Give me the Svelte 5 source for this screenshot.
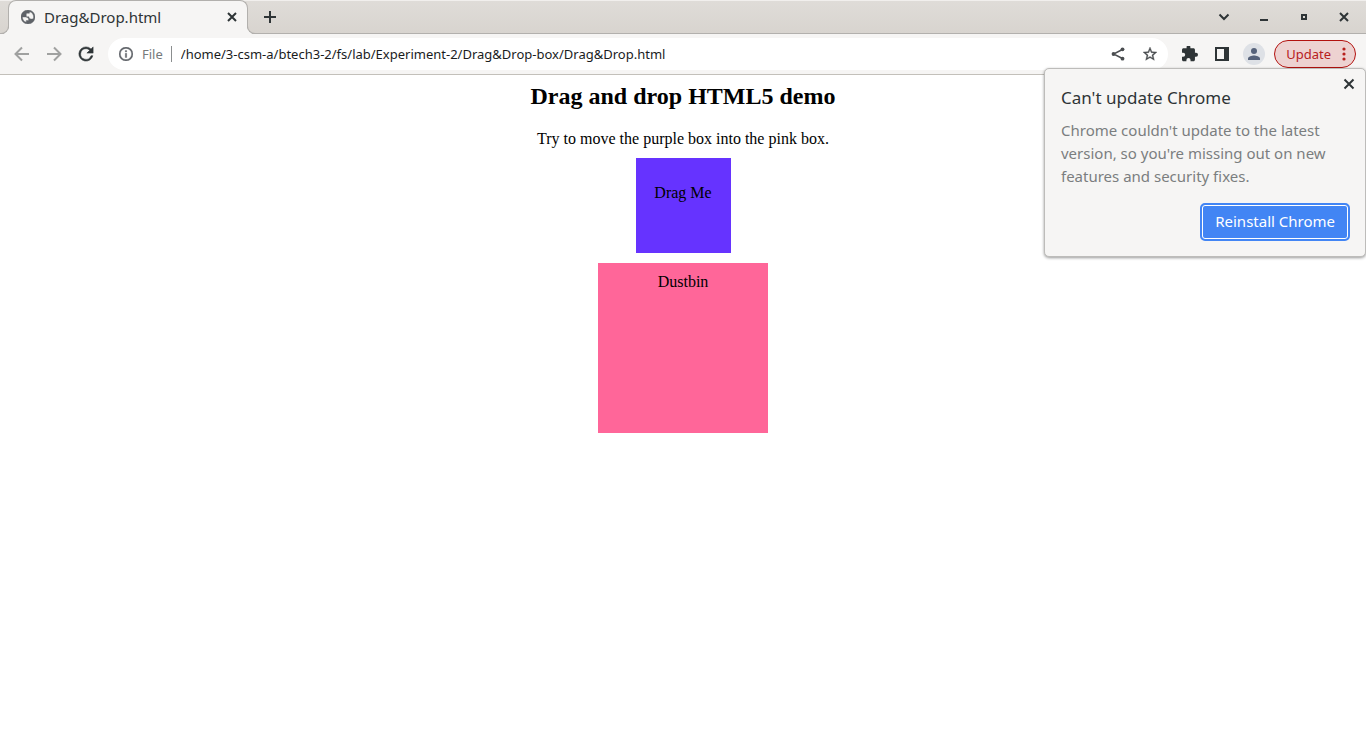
<script>
  const path = '/home/3-csm-a/btech3-2/fs/lab/Experiment-2/Drag&Drop-box/Drag&Drop.html';
  let address = $state(path);
  let popupOpen = $state(true);
  let dropped = $state(false);
</script>

<svelte:head><title>Drag&amp;Drop.html</title></svelte:head>

<div class="browser">
  <header class="strip">
    <div class="tab">
      <svg class="favicon" viewBox="2 2 20 20" width="14" height="14" aria-hidden="true"><path d="M12 2C6.48 2 2 6.48 2 12s4.48 10 10 10 10-4.48 10-10S17.52 2 12 2zM4 12h4.4c3.4.02 4.9 1.73 4.5 5.1H9.500v2.500C6.100 18.500 4 15.500 4 12zm16 0c0 .6-.1 1.200-.2 1.800-.7.800-1.700 1.200-3.200 1.200-2.100 0-3.200-1.100-3.200-3.200h-3.900V8.200c0-1 .5-1.600 1.500-1.600H14c0-1.100.2-1.800.7-2.100C17.900 5.600 20 8.600 20 12z"/></svg>
      <span class="tab-title">Drag&amp;Drop.html</span>
      <button class="icon close" aria-label="Close tab"><svg viewBox="0 0 10 10" width="10" height="10"><path d="M1 1l8 8M9 1L1 9"/></svg></button>
    </div>
    <button class="icon new-tab" aria-label="New tab"><svg viewBox="0 0 12 12" width="12" height="12"><path d="M6 0v12M0 6h12"/></svg></button>
    <div class="window-controls">
      <button class="icon" aria-label="Search tabs"><svg viewBox="0 0 12 12" width="12" height="12"><path class="thin" d="M1.500 3.500L6 8l4.500-4.500"/></svg></button>
      <button class="icon" aria-label="Minimize"><svg viewBox="0 0 12 12" width="12" height="12"><path d="M2 9h8"/></svg></button>
      <button class="icon" aria-label="Maximize"><svg viewBox="0 0 12 12" width="12" height="12"><path d="M4 4h4v4H4z"/></svg></button>
      <button class="icon" aria-label="Close window"><svg viewBox="0 0 12 12" width="12" height="12"><path d="M2 2l8 8M10 2l-8 8"/></svg></button>
    </div>
  </header>

  <nav class="toolbar" aria-label="Browser toolbar">
    <div class="history">
      <button class="icon" aria-label="Back" disabled><svg viewBox="0 0 16 16" width="16" height="16"><path d="M15 8H2M8 1.500L1.500 8 8 14.500"/></svg></button>
      <button class="icon" aria-label="Forward" disabled><svg viewBox="0 0 16 16" width="16" height="16"><path d="M1 8h13M8 1.500L14.500 8 8 14.500"/></svg></button>
      <button class="icon fill" aria-label="Reload"><svg class="reload" viewBox="3 3 18 18" width="16" height="16"><path d="M17.650 6.350A7.960 7.960 0 0 0 12 4a8 8 0 1 0 7.730 10h-2.080A6 6 0 1 1 12 6c1.660 0 3.140.690 4.220 1.780L13 11h7V4z"/></svg></button>
    </div>
    <div class="omnibox">
      <svg class="info" viewBox="2 2 20 20" width="14" height="14" aria-hidden="true"><path d="M11 7h2v2h-2zm0 4h2v6h-2zm1-9a10 10 0 1 0 0 20 10 10 0 0 0 0-20zm0 18a8 8 0 1 1 0-16 8 8 0 0 1 0 16z"/></svg>
      <span class="scheme">File</span>
      <input aria-label="Address" bind:value={address} spellcheck="false" />
      <button class="icon small" aria-label="Share"><svg viewBox="0 0 14 14" width="14" height="14"><path class="line" d="M11.500 2.500L2.500 7l9 4.500"/><circle cx="11.500" cy="2.300" r="1.900"/><circle cx="2.500" cy="7" r="1.900"/><circle cx="11.500" cy="11.700" r="1.900"/></svg></button>
      <button class="icon small" aria-label="Bookmark"><svg class="star" viewBox="2 2 20 20" width="14" height="14"><path d="M22 9.240l-7.190-.620L12 2 9.190 8.630 2 9.240l5.460 4.730L5.820 21 12 17.270 18.180 21l-1.630-7.030L22 9.240zM12 15.400l-3.760 2.270 1-4.280-3.320-2.880 4.380-.380L12 6.100l1.710 4.040 4.380.380-3.320 2.880 1 4.280z"/></svg></button>
    </div>
    <div class="actions">
      <button class="icon fill" aria-label="Extensions"><svg viewBox="2 2 21 21" width="16" height="16"><path d="M20.500 11H19V7c0-1.100-.9-2-2-2h-4V3.500a2.500 2.500 0 0 0-5 0V5H4c-1.100 0-1.990.9-1.990 2v3.800H3.500a2.700 2.700 0 0 1 0 5.400H2V20c0 1.100.9 2 2 2h3.800v-1.500a2.700 2.700 0 0 1 5.400 0V22H17c1.100 0 2-.9 2-2v-4h1.500a2.500 2.500 0 0 0 0-5z"/></svg></button>
      <button class="icon fill" aria-label="Side panel"><svg viewBox="0 0 14 14" width="14" height="14"><path fill-rule="evenodd" d="M0 0h14v14H0zM2 2v10h7V2z"/></svg></button>
      <button class="avatar" aria-label="Profile"><svg viewBox="0 0 12 12" width="12" height="12"><circle cx="6" cy="3" r="3"/><path d="M0 12v-1.500C0 8.500 4 7.500 6 7.500s6 1 6 3V12z"/></svg></button>
      <button class="update">Update<svg viewBox="0 0 4 14" width="4" height="14" aria-hidden="true"><circle cx="2" cy="2" r="1.600"/><circle cx="2" cy="7" r="1.600"/><circle cx="2" cy="12" r="1.600"/></svg></button>
    </div>
  </nav>

  {#if popupOpen}
    <section class="popup" role="dialog" aria-labelledby="popup-title">
      <button class="icon dismiss" aria-label="Close" onclick={() => (popupOpen = false)}><svg viewBox="0 0 12 12" width="12" height="12"><path d="M1.500 1.500l9 9M10.500 1.500l-9 9"/></svg></button>
      <h1 id="popup-title">Can't update Chrome</h1>
      <p>Chrome couldn't update to the latest version, so you're missing out on new features and security fixes.</p>
      <button class="reinstall">Reinstall Chrome</button>
    </section>
  {/if}
</div>

<main>
  <h2>Drag and drop HTML5 demo</h2>
  <p>Try to move the purple box into the pink box.</p>
  {#if !dropped}
    <div class="drag" role="group" draggable="true">Drag Me</div>
  {/if}
  <div class="bin" role="group" ondragover={(e) => e.preventDefault()} ondrop={() => (dropped = true)}>
    Dustbin
    {#if dropped}<div class="drag">Drag Me</div>{/if}
  </div>
</main>

<style>
  :global(body) { background: #fff; }
  .browser { position: relative; font-family: "Noto Sans", "Open Sans", sans-serif; color: #2e3436; }
  button { font: inherit; border: 0; padding: 0; background: none; }
  svg { display: block; flex: none; }
  .icon { display: grid; place-items: center; width: 16px; height: 16px; flex: none; }
  .icon path { fill: none; stroke: #2e3436; stroke-width: 2; }
  .icon:disabled path { stroke: #a0a1a0; }
  .fill path { fill: #2e3436; stroke-width: 0; }
  .fill .reload path { stroke-width: 0.6; }
  .small path { fill: #4a4d50; stroke: none; }
  .small .star path { stroke: #4a4d50; stroke-width: 0.5; }
  .small circle { fill: #4a4d50; }
  .small .line { fill: none; stroke: #4a4d50; stroke-width: 1.4; }

  .strip {
    display: flex; align-items: center; height: 34px; box-sizing: border-box;
    padding: 0 14px 0 8px; border-bottom: 1px solid #b2b0ad;
    background: linear-gradient(#f1efed 1px, #dfdcd8 1px, #d8d4cf);
  }
  .tab {
    position: relative; display: flex; align-items: center; box-sizing: border-box;
    width: 240px; height: 34px; margin-bottom: -1px; padding: 0 7px 2px 12px;
    background: #f6f5f4; border: 1px solid #b2b0ad; border-bottom: 0; border-radius: 8px 8px 0 0;
  }
  .tab::before, .tab::after {
    content: ""; position: absolute; bottom: 0; width: 8px; height: 8px; box-sizing: border-box;
    border-bottom: 1px solid #b2b0ad;
  }
  .tab::before { left: -8px; border-right: 1px solid #b2b0ad; border-bottom-right-radius: 8px; box-shadow: 3px 2px 0 #f6f5f4; clip-path: inset(0 -1px 0 0); }
  .tab::after { right: -8px; border-left: 1px solid #b2b0ad; border-bottom-left-radius: 8px; box-shadow: -3px 2px 0 #f6f5f4; clip-path: inset(0 0 0 -1px); }
  .favicon { fill: #5f6368; stroke: #5f6368; stroke-width: 0.6; }
  .tab-title { flex: 1; margin-left: 9px; font-size: 15px; line-height: 20px; }
  .new-tab { margin-left: 14px; }
  .window-controls { display: flex; gap: 24px; margin-left: auto; }

  .toolbar {
    display: flex; align-items: center; height: 41px; box-sizing: border-box;
    padding: 0 10px 1px 14px; background: #f6f5f4; border-bottom: 1px solid #c3c0ba;
  }
  .history { display: flex; gap: 16px; margin-right: 14px; }
  .omnibox {
    display: flex; flex: 1; align-items: center; box-sizing: border-box; height: 32px;
    padding: 0 10px 0 11px; border-radius: 16px; background: #fff;
  }
  .omnibox .small + .small { margin-left: 16px; }
  .info { fill: #5f6368; stroke: #5f6368; stroke-width: 0.5; }
  .scheme { margin: 0 9px; padding-right: 8px; border-right: 1px solid #8b8e8f; color: #767a7b; font-size: 13px; line-height: 16px; }
  input {
    flex: 1; min-width: 0; padding: 0; border: 0; outline: 0; background: none;
    color: #1a1c1d; font: 13px/20px "Noto Sans", "Open Sans", sans-serif;
  }
  .actions { display: flex; align-items: center; gap: 16px; margin-left: 14px; }
  .avatar { display: grid; place-items: center; width: 22px; height: 22px; margin: 0 -7px 0 -3px; border-radius: 50%; background: #dee1e6; }
  .avatar svg { fill: #56627a; }
  .update {
    display: flex; align-items: center; gap: 11px; box-sizing: border-box; height: 28px;
    padding: 0 9px 0 11px; border: 1px solid #b3120f; border-radius: 14px;
    background: #edd2d1; color: #b8201d; font-size: 13px;
  }
  .update svg { fill: #b8201d; }

  .popup {
    position: absolute; top: 68px; right: 0; z-index: 2; box-sizing: border-box; width: 322px;
    display: flex; flex-direction: column; padding: 17px 15px 15px 16px;
    background: #f6f5f4; border: 1px solid #bdbcba; border-radius: 5px; box-shadow: 0 1px 3px #0006;
  }
  .popup h1 { margin: 0 0 9px; font-size: 17px; line-height: 24px; font-weight: 400; }
  .popup p { margin: 0; color: #7b7e7f; font-size: 15px; line-height: 23px; }
  .dismiss { position: absolute; top: 7px; right: 8px; }
  .reinstall {
    align-self: flex-end; height: 38px; margin-top: 15px; padding: 0 13px 2px;
    border: 2px solid #4285f4; border-radius: 5px; box-shadow: inset 0 0 0 1px #fff;
    background: #4285f4; color: #fff; font-size: 15px;
  }

  main { padding: 8px; text-align: center; color: #000; font: 16px/18px "Liberation Serif", serif; }
  main h2 { margin: 0 0 20px; font-size: 24px; line-height: 27px; }
  main p { margin: 0 0 10px; }
  .drag { box-sizing: border-box; width: 95px; height: 95px; margin: 0 auto 10px; padding-top: 26px; background: #6633ff; }
  .bin { box-sizing: border-box; width: 170px; height: 170px; margin: 0 auto; padding-top: 10px; background: #ff6699; }
</style>
